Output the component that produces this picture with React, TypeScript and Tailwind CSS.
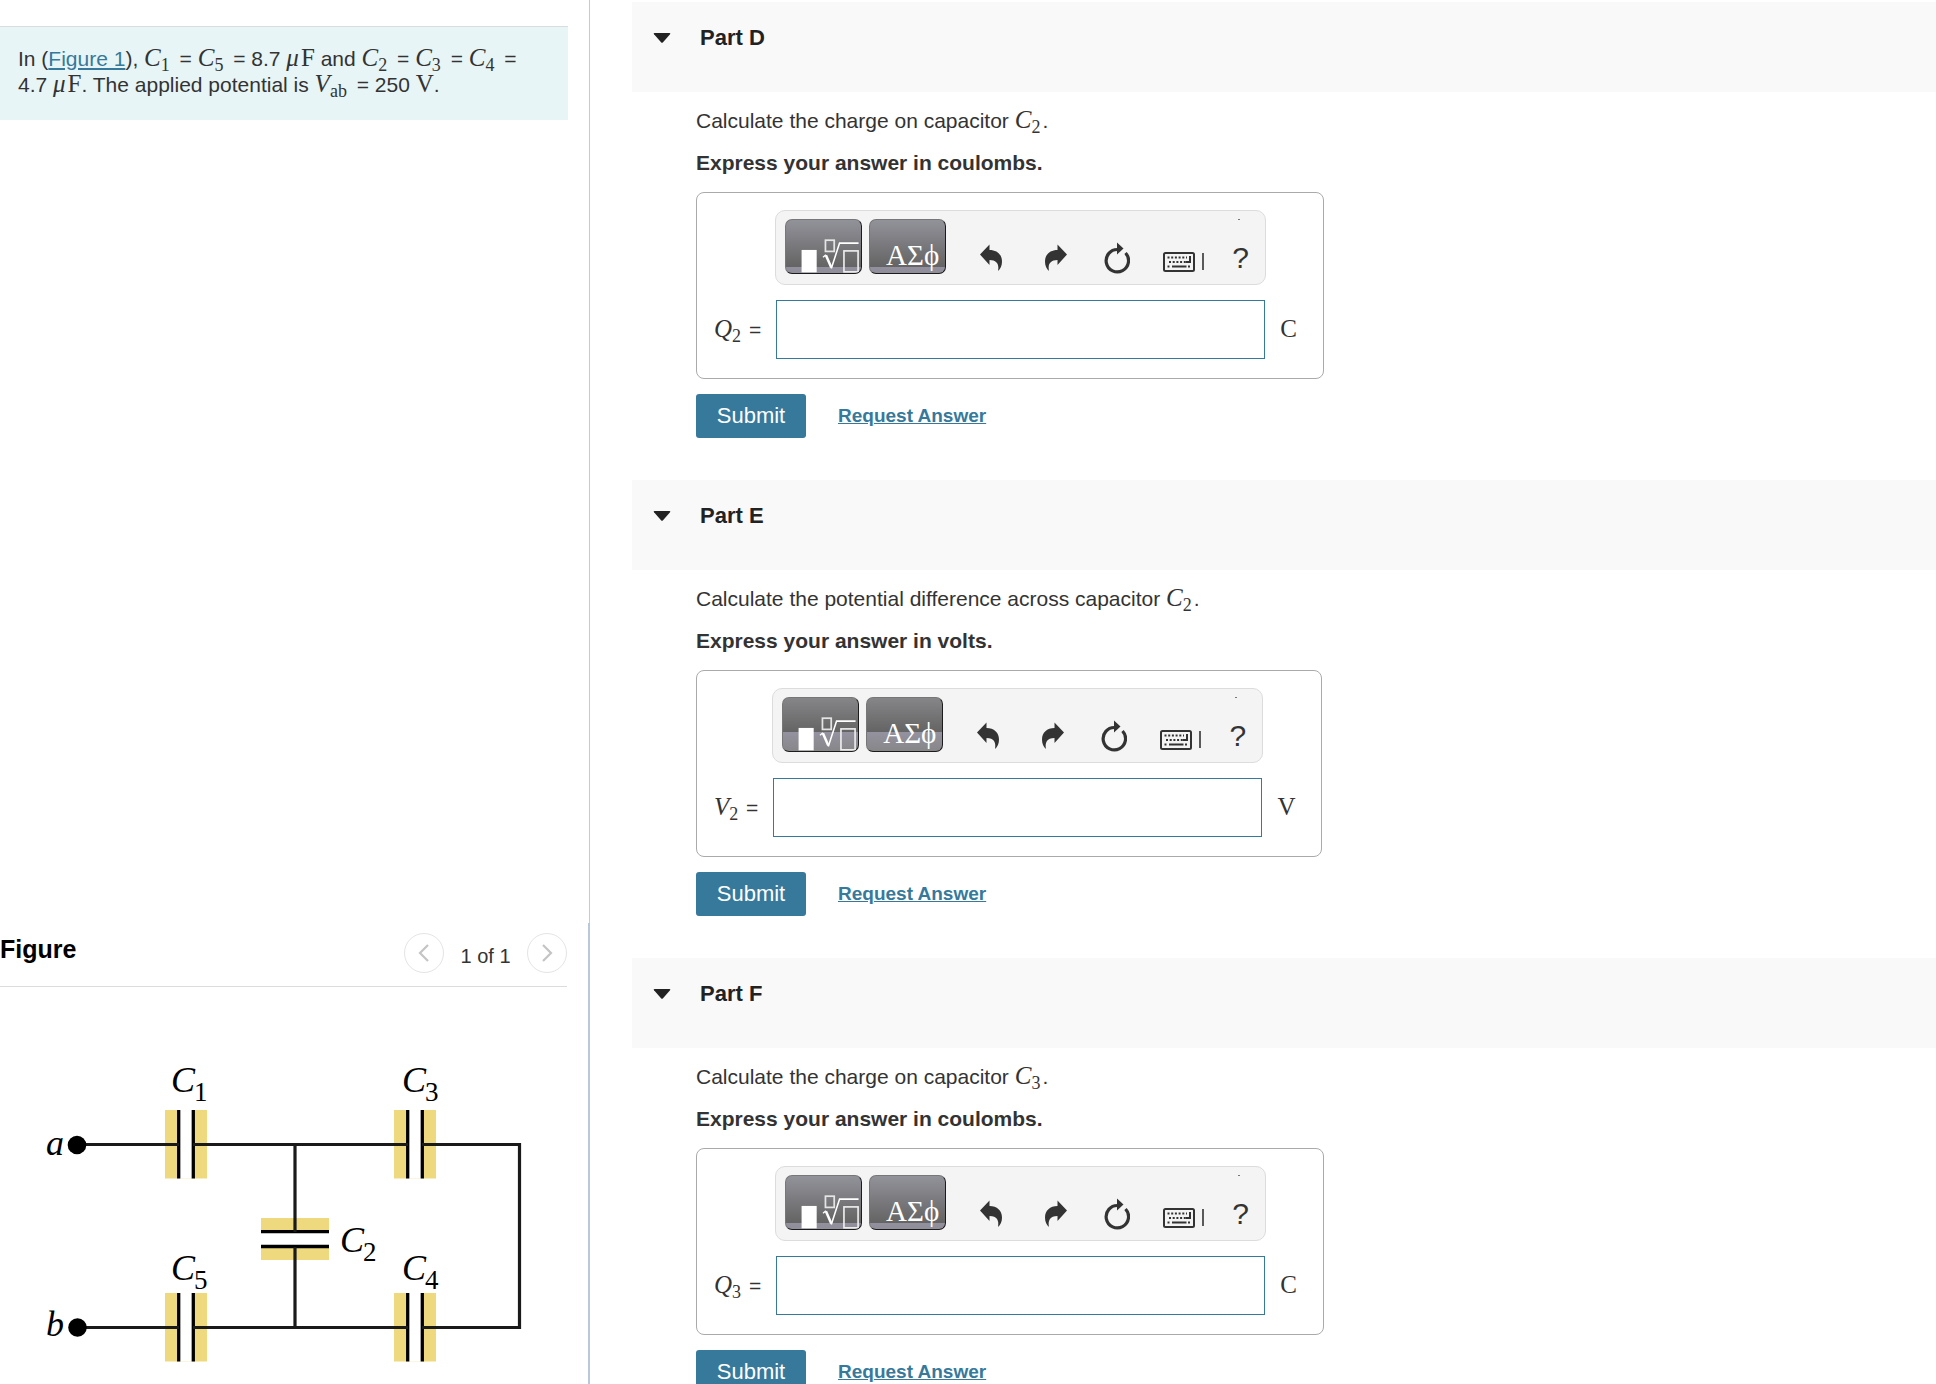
import React from "react";

type MathVarProps = { name: string; sub?: string; spaced?: boolean };

function MathVar({ name, sub, spaced }: MathVarProps) {
  return (
    <span className={`whitespace-nowrap font-['Liberation_Serif',serif] leading-0 ${spaced ? "mr-0.5" : ""}`}>
      <i className="text-[25px]">{name}</i>
      {sub && <span className="mr-0.5 align-[-5px] text-lg leading-0">{sub}</span>}
    </span>
  );
}

function Unit({ children }: { children: React.ReactNode }) {
  return <span className="font-['Liberation_Serif',serif] text-[25px] leading-0">{children}</span>;
}

function TemplateIcon() {
  return (
    <svg viewBox="0 0 77 55" className="h-[55px] w-[77px]" fill="none" stroke="#fff" aria-hidden="true">
      <rect x="16" y="30" width="15.500" height="23" fill="#fff" stroke="none" />
      <rect x="40.500" y="20" width="9" height="11.500" stroke="#e4e4e4" strokeWidth="1.8" />
      <path d="M38 37.500 41 35" strokeWidth="1.5" />
      <path d="M41 35.500 46.500 48" strokeWidth="2.6" />
      <path d="M46.500 49 55 23H74.500" strokeWidth="1.6" />
      <rect x="59.500" y="31" width="14.500" height="21.500" stroke="#ededed" strokeWidth="1.7" />
    </svg>
  );
}

function UndoIcon() {
  return (
    <svg viewBox="0 0 22 32" className="h-8 w-[22px]" fill="#333" aria-hidden="true">
      <path d="M0 12.5 9.5 2.500v5.5C17 8 22 12.5 22 19.500c0 4-1.500 7.500-4 9.500 1.300-6.500-1-11-8.500-11v5Z" />
    </svg>
  );
}

function RedoIcon() {
  return (
    <svg viewBox="0 0 22 32" className="h-8 w-[22px]" fill="#333" aria-hidden="true">
      <path d="M22 12.500 12.500 2.500v5.500C5 8 0 12.500 0 19.500c0 4 1.500 7.500 4 9.500-1.300-6.500 1-11 8.500-11v5Z" />
    </svg>
  );
}

function ResetIcon() {
  return (
    <svg viewBox="0 0 26 32" className="h-8 w-[26px]" aria-hidden="true">
      <path d="M14 7.500A11.200 11.200 0 1 0 21.500 11" fill="none" stroke="#333" strokeWidth="3.200" />
      <path d="M13 .5 19.500 6.500 13 12.500Z" fill="#333" />
    </svg>
  );
}

function KeyboardIcon() {
  return (
    <svg viewBox="0 0 41 32" className="h-8 w-[41px]" fill="none" stroke="#333" aria-hidden="true">
      <rect x="1" y="11" width="30" height="18" rx="1.500" strokeWidth="2" />
      <path d="M4.500 15.500H24M6 20h18M4.500 24.500h2.500M25 24.500h2.500" strokeWidth="2" strokeDasharray="2 1.700" />
      <path d="M9 24.500H23.500M27 14v7M23 20h5" strokeWidth="2" />
      <path d="M40 11V28" strokeWidth="1.600" />
    </svg>
  );
}

const shades = {
  low: "bg-[linear-gradient(#92929a,#646464_88%,#92909e_88%,#8f8e99)]",
  mid: "bg-[linear-gradient(#868689,#646464_64%,#94929f_64%,#878789)]",
};

type Shade = keyof typeof shades;

const paletteButton =
  "flex h-[55px] w-[77px] overflow-hidden rounded-[7px] border border-t-[#777] border-l-[#777] border-r-[#1c1c1c] border-b-[#1c1c1c]";

function Toolbar({ shade }: { shade: Shade }) {
  return (
    <div
      role="toolbar"
      aria-label="Equation tools"
      className="relative flex h-[75px] w-[491px] items-start rounded-[10px] border border-[#dcdcdc] bg-[#f4f4f4] pt-2 pl-[9px]"
    >
      <button type="button" aria-label="Templates" className={`${paletteButton} ${shades[shade]}`}>
        <TemplateIcon />
      </button>
      <button
        type="button"
        aria-label="Symbols"
        className={`${paletteButton} ${shades[shade]} ml-[7px] justify-end pt-[19px] pr-1.5 font-['Liberation_Serif',serif] text-[29px] leading-8 text-white`}
      >
        ΑΣϕ
      </button>
      <div className="flex h-[55px] items-end pl-[34px]">
        <button type="button" aria-label="Undo" className="w-[65px]">
          <UndoIcon />
        </button>
        <button type="button" aria-label="Redo" className="w-[59px]">
          <RedoIcon />
        </button>
        <button type="button" aria-label="Reset" className="w-[59px]">
          <ResetIcon />
        </button>
        <button type="button" aria-label="Keyboard shortcuts" className="w-[69px]">
          <KeyboardIcon />
        </button>
        <button type="button" aria-label="Help" className="text-[30px] leading-8 text-[#333]">
          ?
        </button>
      </div>
      <span className="absolute top-2 right-[25px] h-px w-0.5 bg-[#777]" />
    </div>
  );
}

type PartProps = {
  id: string;
  question: string;
  capacitor: string;
  express: string;
  symbol: string;
  index: string;
  unit: string;
  shade: Shade;
};

function Part({ id, question, capacitor, express, symbol, index, unit, shade }: PartProps) {
  return (
    <section className="pb-[42px]">
      <h2 className="h-[90px] bg-[#f9f9f9]">
        <button
          type="button"
          aria-expanded="true"
          className="flex w-full items-center pt-[22px] pl-[21px] text-[22px] leading-7 font-bold text-[#222]"
        >
          <svg viewBox="0 0 18 10" className="mr-[29px] h-2.5 w-[18px]" fill="#222" aria-hidden="true">
            <path d="M1.500 0h15q1.500 0 .500 1.200L10 9.300q-1 1-2 0L1 1.200Q0 0 1.500 0Z" />
          </svg>
          Part {id}
        </button>
      </h2>
      <div className="flex flex-col items-start pt-4 pl-16">
        <p className="mb-4">
          {question} <MathVar name="C" sub={capacitor} />.
        </p>
        <p className="mb-4 font-bold">Express your answer in {express}.</p>
        <div className="grid grid-cols-[auto_auto_auto] gap-y-[15px] rounded-[8px] border border-[#aaa] pt-[17px] pr-[26px] pb-[19px] pl-[17px]">
          <div className="col-start-2">
            <Toolbar shade={shade} />
          </div>
          <label htmlFor={`answer-${id}`} className="col-start-1 self-center pr-3.5 whitespace-nowrap">
            <MathVar name={symbol} sub={index} /> =
          </label>
          <input
            id={`answer-${id}`}
            type="text"
            className="mx-px h-[59px] min-w-0 border border-[#35799b] bg-white px-3 outline-none"
          />
          <span className="self-center pl-3.5">
            <Unit>{unit}</Unit>
          </span>
        </div>
        <div className="mt-[15px] flex items-center">
          <button type="button" className="h-11 w-[110px] rounded-[3px] bg-[#36799b] text-[22px] leading-7 text-white">
            Submit
          </button>
          <a href="#answer" className="ml-8 text-[19px] leading-6 font-bold text-[#36799b] underline">
            Request Answer
          </a>
        </div>
      </div>
    </section>
  );
}

function CapacitorH({ x, y }: { x: number; y: number }) {
  return (
    <g>
      <rect x={x - 21} y={y - 34} width="42" height="68.500" fill="#eed97f" />
      <rect x={x - 8} y={y - 34} width="16" height="68.500" fill="#fff" />
      <path d={`M${x - 7.3} ${y - 34}v68.500M${x + 7.3} ${y - 34}v68.500`} stroke="#000" strokeWidth="3.300" />
    </g>
  );
}

function CircuitLabel({ x, y, sub }: { x: number; y: number; sub: string }) {
  return (
    <g className="font-['Liberation_Serif',serif]">
      <text x={x} y={y} fontSize="36" fontStyle="italic">
        C
      </text>
      <text x={x + 23} y={y + 9} fontSize="27">
        {sub}
      </text>
    </g>
  );
}

function Circuit() {
  return (
    <svg viewBox="0 0 567 334" className="block w-full" role="img" aria-label="Circuit of five capacitors between a and b">
      <CapacitorH x={186} y={94} />
      <CapacitorH x={415} y={94} />
      <CapacitorH x={186} y={277} />
      <CapacitorH x={415} y={277} />
      <rect x="261" y="168" width="68" height="42" fill="#eed97f" />
      <rect x="261" y="181" width="68" height="16" fill="#fff" />
      <path d="M261 181.700h68M261 196.500h68" stroke="#000" strokeWidth="3.300" />
      <g fill="none" stroke="#1a1a1a" strokeWidth="3.200">
        <path d="M77 94.500H179M193 94.500H408M422 94.500H519.500V277.500H422M408 277.500H193M179 277.500H77" />
        <path d="M295 94.500V182M295 197V277.500" />
      </g>
      <circle cx="77" cy="95" r="9.300" />
      <circle cx="77.500" cy="277.500" r="9.300" />
      <g className="font-['Liberation_Serif',serif]" fontSize="36" fontStyle="italic">
        <text x="46" y="105">a</text>
        <text x="46" y="286">b</text>
      </g>
      <CircuitLabel x={171} y={42} sub="1" />
      <CircuitLabel x={402} y={42} sub="3" />
      <CircuitLabel x={340} y={202} sub="2" />
      <CircuitLabel x={171} y={230} sub="5" />
      <CircuitLabel x={402} y={230} sub="4" />
    </svg>
  );
}

function PagerButton({ label, d }: { label: string; d: string }) {
  return (
    <button
      type="button"
      aria-label={label}
      className="flex size-10 items-center justify-center rounded-full border border-[#e4e4e4] bg-white"
    >
      <svg viewBox="0 0 12 18" className="h-[18px] w-3" fill="none" stroke="#c4c4c4" strokeWidth="2.200" aria-hidden="true">
        <path d={d} />
      </svg>
    </button>
  );
}

const parts: PartProps[] = [
  { id: "D", question: "Calculate the charge on capacitor", capacitor: "2", express: "coulombs", symbol: "Q", index: "2", unit: "C", shade: "low" },
  { id: "E", question: "Calculate the potential difference across capacitor", capacitor: "2", express: "volts", symbol: "V", index: "2", unit: "V", shade: "mid" },
  { id: "F", question: "Calculate the charge on capacitor", capacitor: "3", express: "coulombs", symbol: "Q", index: "3", unit: "C", shade: "low" },
];

export default function App() {
  return (
    <div className="grid h-screen grid-cols-[590px_minmax(0,1fr)] overflow-hidden bg-white font-['Liberation_Sans',Arial,sans-serif] text-[21px] leading-[26px] text-[#333]">
      <aside className="flex min-h-0 flex-col">
        <div className="flex-1 border-r border-[#c0cbdc] pt-[26px] pr-[21px]">
          <div className="border-t border-[#d9dddd] bg-[#e8f5f6] pt-[19px] pr-8 pb-[22px] pl-[18px]">
            <p>
              In (
              <a href="#figure" className="text-[#36799b] underline">
                Figure 1
              </a>
              ), <MathVar name="C" sub="1" spaced /> = <MathVar name="C" sub="5" spaced /> = 8.7{" "}
              <MathVar name="μ" spaced />
              <Unit>F</Unit> and <MathVar name="C" sub="2" spaced /> = <MathVar name="C" sub="3" spaced /> ={" "}
              <MathVar name="C" sub="4" spaced /> =<br />
              4.7 <MathVar name="μ" spaced />
              <Unit>F</Unit>. The applied potential is <MathVar name="V" sub="ab" spaced /> = 250 <Unit>V</Unit>.
            </p>
          </div>
        </div>
        <div id="figure" className="h-[461px] border-r-2 border-[#b9c8da] pr-[21px]">
          <div className="flex h-16 items-start justify-between border-b border-[#dcdcdc] pt-2.5">
            <h2 className="text-[25px] leading-8 font-bold text-black">Figure</h2>
            <div className="flex items-center">
              <PagerButton label="Previous figure" d="M10 1 2 9l8 8" />
              <span className="w-[83px] pt-1.5 text-center text-xl leading-6">1 of 1</span>
              <PagerButton label="Next figure" d="M2 1l8 8-8 8" />
            </div>
          </div>
          <div className="pt-[63px]">
            <Circuit />
          </div>
        </div>
      </aside>
      <main className="min-h-0 overflow-hidden pt-0.5 pl-[42px]">
        {parts.map((part) => (
          <Part key={part.id} {...part} />
        ))}
      </main>
    </div>
  );
}
